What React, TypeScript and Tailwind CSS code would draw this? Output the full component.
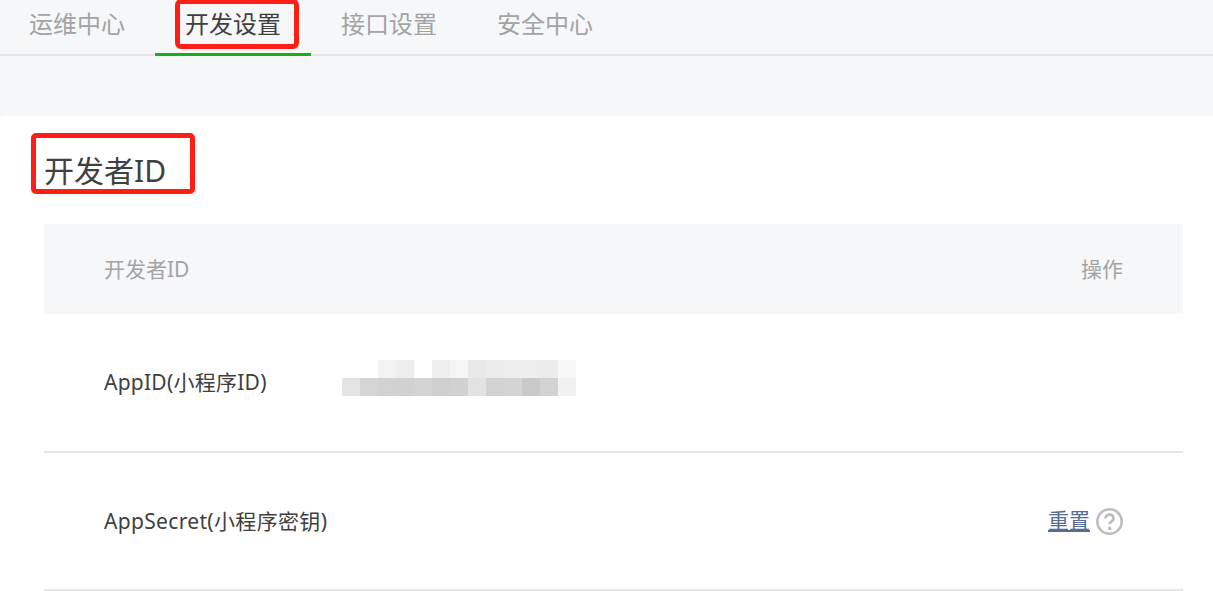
const font = "font-['Noto_Sans','Noto_Sans_CJK_SC',sans-serif]";

const topCells = ["bg-white","bg-white","bg-[#f3f3f3]","bg-[#eeeeee]","bg-white","bg-[#efefef]","bg-[#f5f5f5]","bg-[#e9e9e9]","bg-[#ebebeb]","bg-[#eeeeee]","bg-[#eeeeee]","bg-[#ececec]","bg-[#f8f8f8]"];
const bottomCells = ["bg-[#e4e4e4]","bg-[#d5d5d5]","bg-[#d2d2d2]","bg-[#d1d1d1]","bg-[#d4d4d4]","bg-[#cfcfcf]","bg-[#d1d1d1]","bg-[#e3e3e3]","bg-[#d2d2d2]","bg-[#d4d4d4]","bg-[#c9c9c9]","bg-[#d2d2d2]","bg-[#f1f1f1]"];

function Tab({ label, active }: { label: string; active?: boolean }) {
  return (
    <div className={`relative h-[56px] w-[156px] shrink-0 text-center text-[24px] leading-[47px] ${active ? "text-[#404040]" : "text-[#a3a3a3]"}`}>
      {label}
      {active && <div className="absolute bottom-0 left-0 h-[3px] w-full bg-[#1aad19]" />}
    </div>
  );
}

export default function App() {
  return (
    <div className={`relative h-[591px] w-[1213px] overflow-hidden bg-[#f6f7f9] ${font}`}>
      <div className="flex h-[56px] border-b-2 border-[#e7e7eb]">
        <div className="-ml-[1px] flex">
          <Tab label="运维中心" />
          <Tab label="开发设置" active />
          <Tab label="接口设置" />
          <Tab label="安全中心" />
        </div>
      </div>

      <div className="mt-[60px] h-[475px] rounded-t-[4px] bg-white pl-[44px] pr-[30px]">
        <h2 className="pt-[34px] text-[30px] font-normal leading-[42px] text-[#404040]">开发者ID</h2>

        <div className="mt-[32px] flex h-[90px] items-center justify-between bg-[#f6f7f9] pb-0 pl-[60px] pr-[60px] pt-[2px] text-[21px] text-[#a3a3a3]">
          <span>开发者ID</span>
          <span>操作</span>
        </div>

        <div className="flex h-[139px] items-start border-b-2 border-[#e7e7eb] pl-[60px] text-[21px] text-[#404040]">
          <span className="mt-[53px] w-[238px] shrink-0 leading-[30px] tracking-[0.25px]">AppID(小程序ID)</span>
          <div className="mt-[46px] flex flex-col">
            <div className="flex">
              {topCells.map((c, i) => <div key={i} className={`h-[18px] w-[18px] ${c}`} />)}
            </div>
            <div className="flex">
              {bottomCells.map((c, i) => <div key={i} className={`h-[18px] w-[18px] ${c}`} />)}
            </div>
          </div>
        </div>

        <div className="flex h-[138px] items-center justify-between border-b-2 border-[#e7e7eb] px-[60px] text-[21px] text-[#404040]">
          <span className="pt-[2px] tracking-[0.33px]">AppSecret(小程序密钥)</span>
          <div className="flex items-center gap-[6px]">
            <span className="text-[#576b95] underline underline-offset-2">重置</span>
            <svg width="27" height="27" viewBox="0 0 27 27" fill="none">
              <circle cx="13.5" cy="13.5" r="12.2" stroke="#bdbdbd" strokeWidth="2.6" />
              <path d="M9.4 10.6c0-2.3 1.8-3.9 4.1-3.9s4 1.4 4 3.5c0 1.5-.8 2.4-2 3.2-1.2.8-1.8 1.4-1.8 2.9" stroke="#bdbdbd" strokeWidth="2.7" fill="none" />
              <circle cx="13.7" cy="20.4" r="1.8" fill="#bdbdbd" />
            </svg>
          </div>
        </div>
      </div>

      <div className="absolute left-[175px] top-[-1px] h-[50px] w-[124px] rounded-[6px] border-[5px] border-[#fe1e14]" />
      <div className="absolute left-[31px] top-[133px] h-[61px] w-[164px] rounded-[5px] border-[5px] border-[#fe1e14]" />
    </div>
  );
}
